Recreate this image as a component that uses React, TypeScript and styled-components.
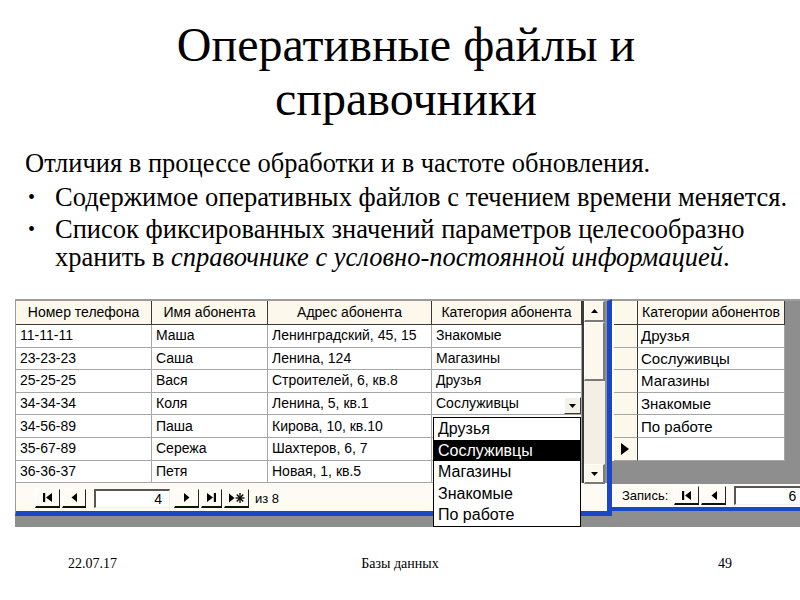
import React from 'react';
import styled, { createGlobalStyle } from 'styled-components';

const C = {
  cream: '#fcf8ec',
  navBg: '#fdfbf4',
  grid: '#a6a6a6',
  dark: '#3a3a3a',
  gray: '#8e8e8e',
  edge: '#9c9c9c',
  blue: '#1a46c8',
  track: '#f3efe4',
};

const GlobalStyle = createGlobalStyle`
  html, body { margin: 0; padding: 0; background: #fff; }
  #root { width: 800px; height: 600px; }
`;

const Slide = styled.div`
  width: 800px;
  height: 600px;
  display: flex;
  flex-direction: column;
  background: #fff;
  overflow: hidden;
  color: #000;
  font-family: "Liberation Serif", "Times New Roman", serif;
`;

const Title = styled.h1`
  margin: 0;
  height: 140px;
  box-sizing: border-box;
  padding: 18px 0 0 12px;
  font-weight: normal;
  font-size: 48px;
  line-height: 54px;
  text-align: center;
`;

const Body = styled.div`
  height: 159px;
  box-sizing: border-box;
  padding: 9px 0 0 25px;
  font-size: 26.5px;
  line-height: 28px;
  display: flex;
  flex-direction: column;
`;

const Lead = styled.div`
  white-space: nowrap;
`;

const Bullet = styled.div<{ $gap: number }>`
  display: flex;
  margin-top: ${(p) => p.$gap}px;
  white-space: nowrap;
`;

const Dot = styled.span`
  width: 30px;
  flex: none;
  padding-left: 3px;
  box-sizing: border-box;
  font-size: 20px;
`;

const Figure = styled.div`
  height: 228px;
  margin-left: 15px;
  display: flex;
  flex-direction: column;
  position: relative;
  font-family: "Liberation Sans", Arial, sans-serif;
`;

const Windows = styled.div`
  display: flex;
  height: 217px;
`;

const GrayBand = styled.div`
  flex: 1;
  background: ${C.gray};
`;

const LeftWindow = styled.div`
  width: 597px;
  flex: none;
  box-sizing: border-box;
  border-top: 2px solid ${C.edge};
  border-left: 1px solid ${C.edge};
  border-right: 5px solid ${C.blue};
  border-bottom: 5px solid ${C.blue};
  display: flex;
  flex-direction: column;
  background: ${C.navBg};
`;

const RightWindow = styled.div`
  flex: 1;
  box-sizing: border-box;
  border-top: 2px solid ${C.edge};
  display: flex;
  flex-direction: column;
  background: ${C.gray};
  overflow: hidden;
`;

const TableRow = styled.div`
  display: flex;
  height: 182px;
  flex: none;
  background: ${C.gray};
`;

const Grid = styled.div<{ $cols: string; $rows: number }>`
  display: grid;
  grid-template-columns: ${(p) => p.$cols};
  grid-template-rows: 24px repeat(${(p) => p.$rows}, 22.6px);
  background: #fff;
  align-self: flex-start;
`;

const LeftGrid = styled(Grid)`
  border-right: 2px solid ${C.dark};
  height: 182px;
  box-sizing: border-box;
`;

const RightGrid = styled(Grid)`
  border-left: 2px solid #fff;
`;

const HeadCell = styled.div`
  background: ${C.cream};
  border-right: 1px solid ${C.dark};
  border-bottom: 1px solid ${C.dark};
  font-size: 14px;
  line-height: 23px;
  text-align: center;
  white-space: nowrap;
  overflow: hidden;
`;

const Cell = styled.div`
  border-right: 1px solid ${C.grid};
  border-bottom: 1px solid ${C.grid};
  font-size: 14px;
  line-height: 21px;
  padding-left: 4px;
  white-space: nowrap;
  overflow: hidden;
  display: flex;
  align-items: center;
  justify-content: space-between;
`;

const SelCell = styled.div`
  background: ${C.cream};
  border-right: 1px solid ${C.dark};
  border-bottom: 1px solid ${C.grid};
  display: flex;
  align-items: center;
  padding-left: 7px;
`;

const RCell = styled(Cell)`
  font-size: 15px;
  padding-left: 3px;
`;

const ComboBtn = styled.span`
  width: 17px;
  height: 17px;
  align-self: flex-end;
  box-sizing: border-box;
  background: #f4f1e8;
  border-top: 1px solid #fff;
  border-left: 1px solid #fff;
  border-right: 1px solid ${C.dark};
  border-bottom: 1px solid ${C.dark};
  display: flex;
  align-items: center;
  justify-content: center;
`;

const Scrollbar = styled.div`
  width: 21px;
  height: 183px;
  flex: none;
  display: flex;
  flex-direction: column;
  background: ${C.track};
`;

const ScrollBtn = styled.div<{ $h: number }>`
  height: ${(p) => p.$h}px;
  flex: none;
  box-sizing: border-box;
  background: ${C.cream};
  border-top: 1px solid #fff;
  border-left: 1px solid #fff;
  border-right: 2px solid #7a7a7a;
  border-bottom: 2px solid #7a7a7a;
  display: flex;
  align-items: center;
  justify-content: center;
`;

const ScrollTrack = styled.div`
  flex: 1;
`;

const ScrollGap = styled.div`
  width: 2px;
  flex: none;
`;

const Nav = styled.div<{ $pad: number }>`
  display: flex;
  align-items: center;
  height: 26px;
  margin-top: auto;
  padding-left: ${(p) => p.$pad}px;
  background: ${C.navBg};
  font-size: 13px;
  white-space: nowrap;
`;

const RightNav = styled(Nav)`
  height: 23px;
  flex: none;
  border-bottom: 4px solid ${C.blue};
  margin-bottom: 5px;
  overflow: hidden;
`;

const NavBtn = styled.span<{ $w: number }>`
  width: ${(p) => p.$w}px;
  height: 19px;
  flex: none;
  box-sizing: border-box;
  border-top: 1px solid #fff;
  border-left: 1px solid #fff;
  border-right: 1px solid #222;
  border-bottom: 2px solid #111;
  display: flex;
  align-items: center;
  justify-content: center;
  margin-right: 2px;
`;

const NavInput = styled.span<{ $w: number }>`
  width: ${(p) => p.$w}px;
  height: 19px;
  flex: none;
  box-sizing: border-box;
  background: #fff;
  border-top: 2px solid #555;
  border-left: 2px solid #555;
  border-right: 1px solid #eee;
  border-bottom: 1px solid #eee;
  text-align: right;
  padding-right: 7px;
  font-size: 14px;
  line-height: 17px;
  margin: 0 4px 0 6px;
`;

const NavLabel = styled.span<{ $ml: number }>`
  margin-left: ${(p) => p.$ml}px;
  margin-right: 6px;
`;

const Dropdown = styled.div`
  position: absolute;
  left: 418px;
  top: 118px;
  width: 148px;
  height: 110px;
  box-sizing: border-box;
  border: 1px solid #000;
  background: #fff;
  display: flex;
  flex-direction: column;
  z-index: 2;
`;

const DropItem = styled.div<{ $sel?: boolean }>`
  height: 21.6px;
  line-height: 21px;
  padding-left: 4px;
  font-size: 16px;
  background: ${(p) => (p.$sel ? '#000' : '#fff')};
  color: ${(p) => (p.$sel ? '#fff' : '#000')};
`;

const Footer = styled.div`
  flex: 1;
  display: grid;
  grid-template-columns: 1fr auto 1fr;
  align-items: center;
  padding: 0 68px;
  font-size: 14px;
`;

const FootRight = styled.span`
  justify-self: end;
`;

const Ico = ({ kind }: { kind: string }) => {
  switch (kind) {
    case 'first':
      return (
        <svg width="11" height="11" viewBox="0 0 11 11">
          <rect x="1" y="1" width="2.2" height="9" />
          <path d="M10 1 L4 5.5 L10 10Z" />
        </svg>
      );
    case 'prev':
      return (
        <svg width="8" height="11" viewBox="0 0 8 11">
          <path d="M7 1 L1.5 5.5 L7 10Z" />
        </svg>
      );
    case 'next':
      return (
        <svg width="8" height="11" viewBox="0 0 8 11">
          <path d="M1 1 L6.5 5.5 L1 10Z" />
        </svg>
      );
    case 'last':
      return (
        <svg width="11" height="11" viewBox="0 0 11 11">
          <path d="M1 1 L7 5.5 L1 10Z" />
          <rect x="7.8" y="1" width="2.2" height="9" />
        </svg>
      );
    case 'new':
      return (
        <svg width="18" height="12" viewBox="0 0 18 12">
          <path d="M1 1.5 L6.5 6 L1 10.5Z" />
          <g stroke="#000" strokeWidth="1.3">
            <line x1="12" y1="1" x2="12" y2="11" />
            <line x1="7.5" y1="6" x2="16.5" y2="6" />
            <line x1="8.8" y1="2.5" x2="15.2" y2="9.5" />
            <line x1="15.2" y1="2.5" x2="8.8" y2="9.5" />
          </g>
        </svg>
      );
    case 'up':
      return (
        <svg width="7" height="4" viewBox="0 0 7 4">
          <path d="M0 4 L3.5 0 L7 4Z" />
        </svg>
      );
    case 'down':
      return (
        <svg width="7" height="4" viewBox="0 0 7 4">
          <path d="M0 0 L3.5 4 L7 0Z" />
        </svg>
      );
    case 'row':
      return (
        <svg width="8" height="12" viewBox="0 0 8 12">
          <path d="M0 0 L8 6 L0 12Z" />
        </svg>
      );
    default:
      return null;
  }
};

const headers = ['Номер телефона', 'Имя абонента', 'Адрес абонента', 'Категория абонента'];
const rows: string[][] = [
  ['11-11-11', 'Маша', 'Ленинградский, 45, 15', 'Знакомые'],
  ['23-23-23', 'Саша', 'Ленина, 124', 'Магазины'],
  ['25-25-25', 'Вася', 'Строителей, 6, кв.8', 'Друзья'],
  ['34-34-34', 'Коля', 'Ленина, 5, кв.1', 'Сослуживцы'],
  ['34-56-89', 'Паша', 'Кирова, 10, кв.10', ''],
  ['35-67-89', 'Сережа', 'Шахтеров, 6, 7', ''],
  ['36-36-37', 'Петя', 'Новая, 1, кв.5', ''],
];
const categories = ['Друзья', 'Сослуживцы', 'Магазины', 'Знакомые', 'По работе'];

export default function App() {
  return (
    <>
      <GlobalStyle />
      <Slide>
        <Title>
          Оперативные файлы и
          <br />
          справочники
        </Title>
        <Body>
          <Lead>Отличия в процессе обработки и в частоте обновления.</Lead>
          <Bullet $gap={6}>
            <Dot>•</Dot>
            <span>Содержимое оперативных файлов с течением времени меняется.</span>
          </Bullet>
          <Bullet $gap={4}>
            <Dot>•</Dot>
            <span>
              Список фиксированных значений параметров целесообразно
              <br />
              хранить в <i>справочнике с условно-постоянной информацией</i>.
            </span>
          </Bullet>
        </Body>
        <Figure>
          <Windows>
            <LeftWindow>
              <TableRow>
                <LeftGrid $cols="136px 116px 164px 150px" $rows={7}>
                  {headers.map((h) => (
                    <HeadCell key={h}>{h}</HeadCell>
                  ))}
                  {rows.map((r, i) =>
                    r.map((v, j) => (
                      <Cell key={`${i}-${j}`}>
                        {v}
                        {i === 3 && j === 3 && (
                          <ComboBtn>
                            <Ico kind="down" />
                          </ComboBtn>
                        )}
                      </Cell>
                    ))
                  )}
                </LeftGrid>
                <Scrollbar>
                  <ScrollBtn $h={21}>
                    <Ico kind="up" />
                  </ScrollBtn>
                  <ScrollBtn $h={59} />
                  <ScrollTrack />
                  <ScrollBtn $h={20}>
                    <Ico kind="down" />
                  </ScrollBtn>
                </Scrollbar>
                <ScrollGap />
              </TableRow>
              <Nav $pad={19}>
                <NavBtn $w={25}>
                  <Ico kind="first" />
                </NavBtn>
                <NavBtn $w={24}>
                  <Ico kind="prev" />
                </NavBtn>
                <NavInput $w={76}>4</NavInput>
                <NavBtn $w={25}>
                  <Ico kind="next" />
                </NavBtn>
                <NavBtn $w={21}>
                  <Ico kind="last" />
                </NavBtn>
                <NavBtn $w={25}>
                  <Ico kind="new" />
                </NavBtn>
                <NavLabel $ml={4}>из 8</NavLabel>
              </Nav>
            </LeftWindow>
            <RightWindow>
              <TableRow>
                <RightGrid $cols="24px 147px" $rows={6}>
                  <HeadCell />
                  <HeadCell>Категории абонентов</HeadCell>
                  {categories.map((c) => (
                    <React.Fragment key={c}>
                      <SelCell />
                      <RCell>{c}</RCell>
                    </React.Fragment>
                  ))}
                  <SelCell>
                    <Ico kind="row" />
                  </SelCell>
                  <RCell />
                </RightGrid>
              </TableRow>
              <RightNav $pad={10}>
                <NavLabel $ml={0}>Запись:</NavLabel>
                <NavBtn $w={25}>
                  <Ico kind="first" />
                </NavBtn>
                <NavBtn $w={25}>
                  <Ico kind="prev" />
                </NavBtn>
                <NavInput $w={70}>6</NavInput>
              </RightNav>
            </RightWindow>
          </Windows>
          <GrayBand />
          <Dropdown>
            {categories.map((c) => (
              <DropItem key={c} $sel={c === 'Сослуживцы'}>
                {c}
              </DropItem>
            ))}
          </Dropdown>
        </Figure>
        <Footer>
          <span>22.07.17</span>
          <span>Базы данных</span>
          <FootRight>49</FootRight>
        </Footer>
      </Slide>
    </>
  );
}
